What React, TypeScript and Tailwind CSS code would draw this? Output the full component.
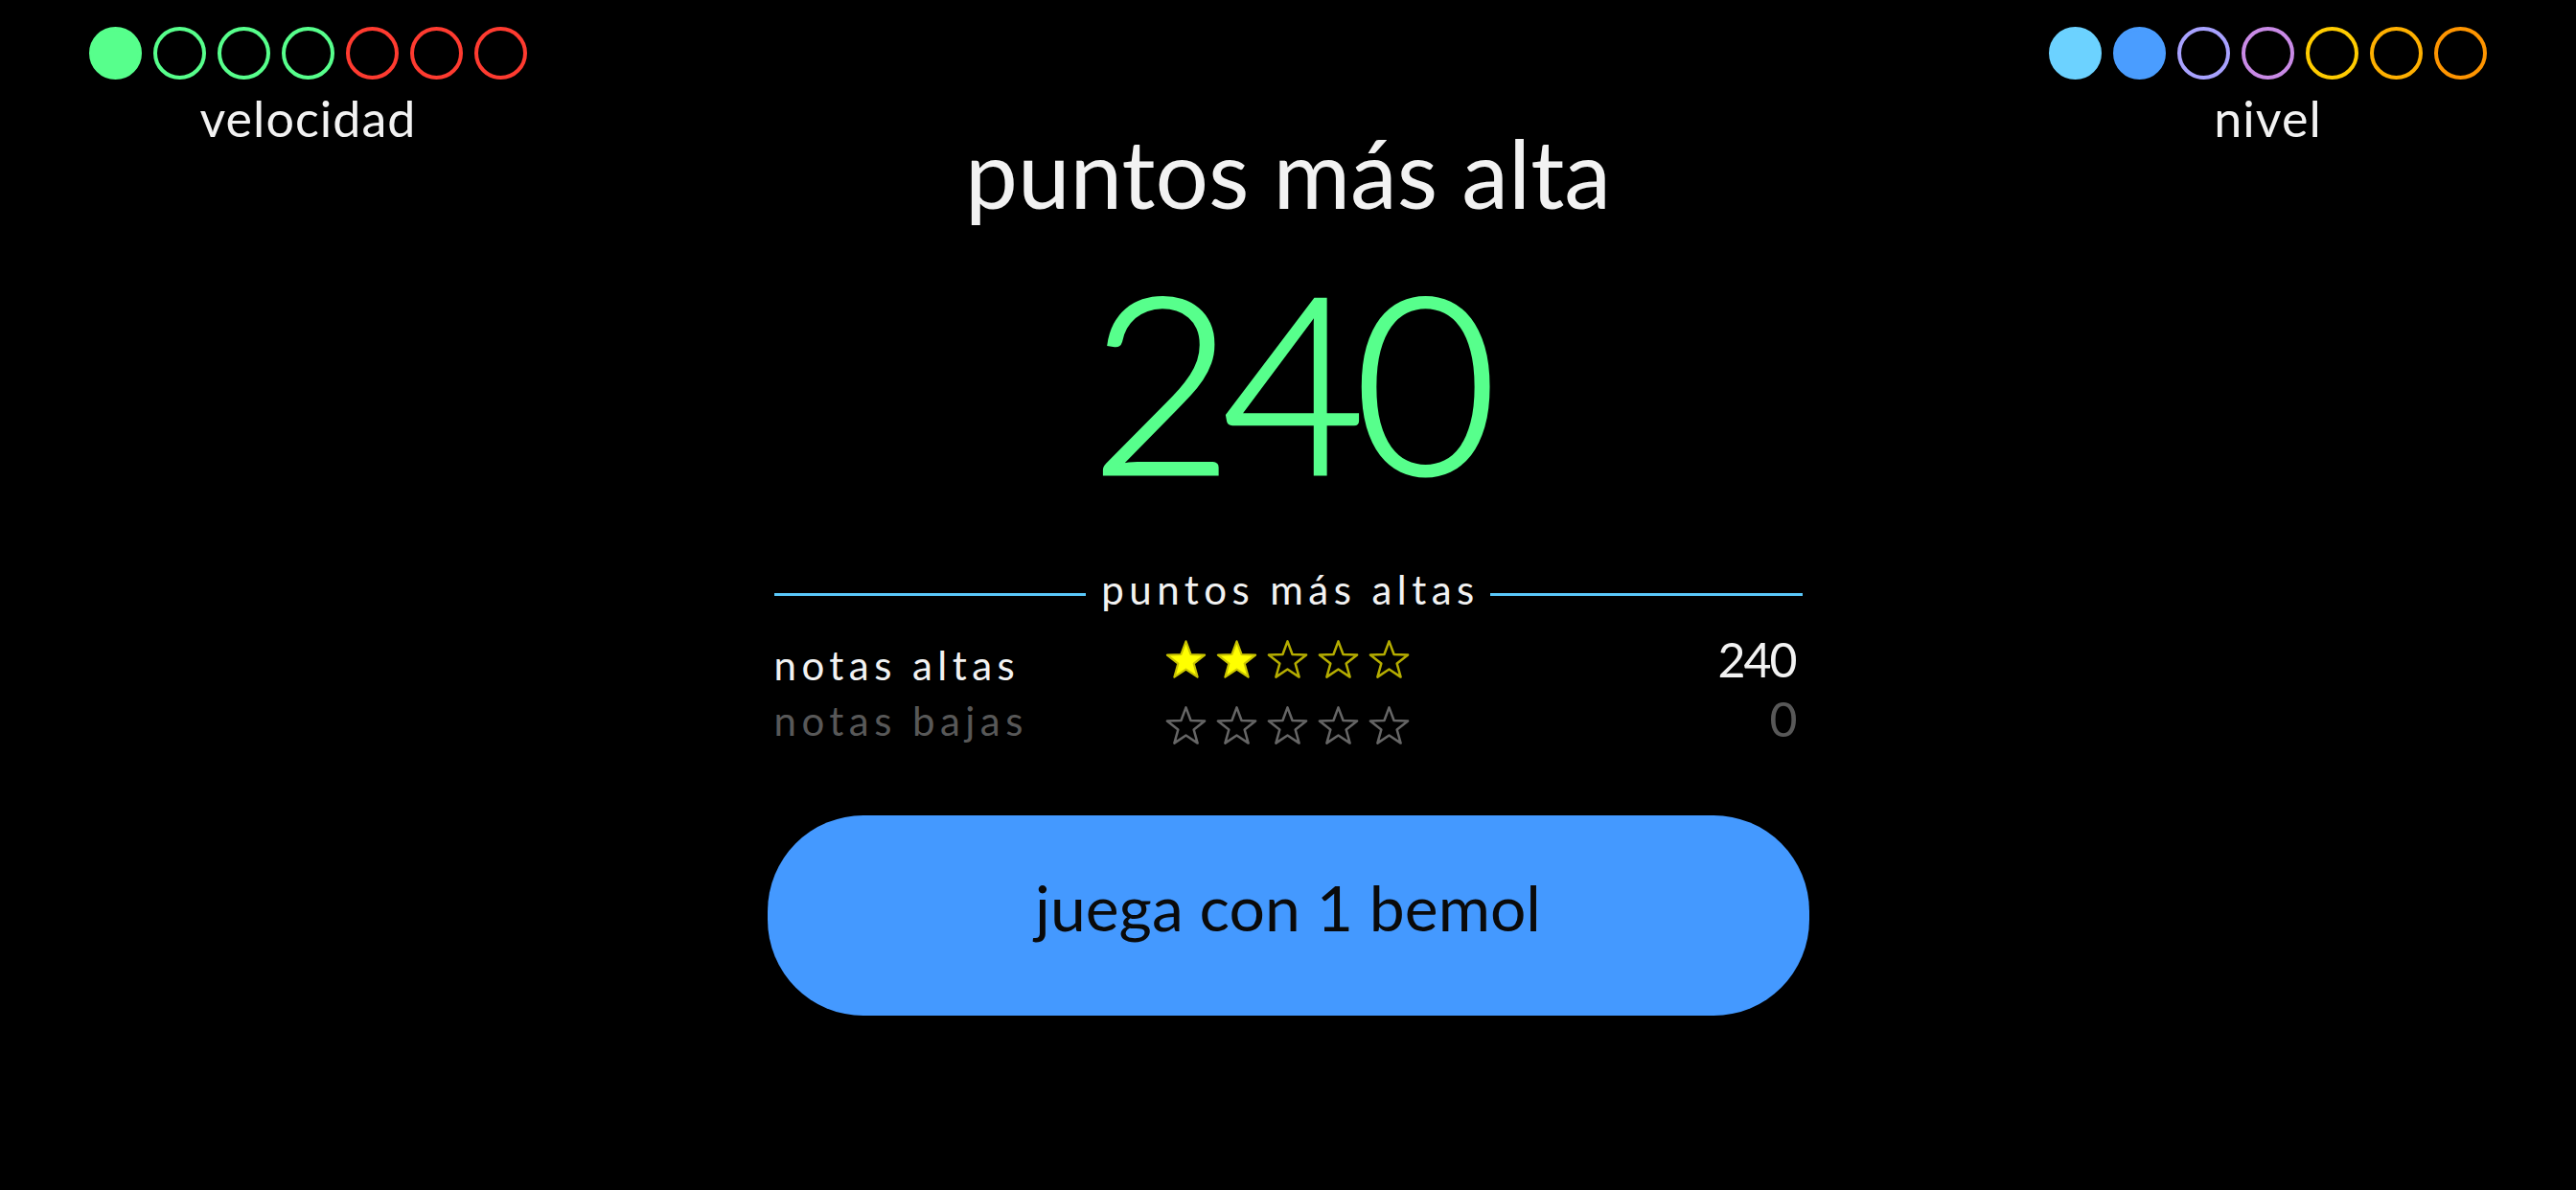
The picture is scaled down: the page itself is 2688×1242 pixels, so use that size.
import React from "react";

const font = { fontFamily: "Lato, 'Noto Sans', sans-serif" };

const STAR = "M12 1.3 L14.82 8.92 L22.94 9.25 L16.57 14.28 L18.76 22.1 L12 17.6 L5.24 22.1 L7.43 14.28 L1.06 9.25 L9.18 8.92 Z";

function Star({ kind }: { kind: "full" | "empty" | "off" }) {
  if (kind === "full") {
    return (
      <svg width="43" height="43" viewBox="0 0 24 24">
        <path d={STAR} fill="#ffff00" stroke="#c9c400" strokeWidth="1.2" strokeLinejoin="round" />
      </svg>
    );
  }
  return (
    <svg width="43" height="43" viewBox="0 0 24 24">
      <path d={STAR} fill="none" stroke={kind === "empty" ? "#b5ad00" : "#666666"} strokeWidth="1.4" strokeLinejoin="round" />
    </svg>
  );
}

function Dot({ color, filled }: { color: string; filled?: boolean }) {
  return (
    <div
      className="w-[55px] h-[55px] rounded-full border-[4px]"
      style={{ borderColor: color, backgroundColor: filled ? color : "transparent" }}
    />
  );
}

const speed = [
  { c: "#57ff8c", f: true },
  { c: "#57ff8c" },
  { c: "#57ff8c" },
  { c: "#57ff8c" },
  { c: "#ff3b30" },
  { c: "#ff3b30" },
  { c: "#ff3b30" },
];

const level = [
  { c: "#6cd2ff", f: true },
  { c: "#4a9dff", f: true },
  { c: "#a8a2ff" },
  { c: "#c98ae6" },
  { c: "#ffcc00" },
  { c: "#ffb000" },
  { c: "#ff9500" },
];

function Meter({ dots, label }: { dots: { c: string; f?: boolean }[]; label: string }) {
  return (
    <div className="flex flex-col items-center w-[457px]">
      <div className="flex gap-3">
        {dots.map((d, i) => (
          <Dot key={i} color={d.c} filled={d.f} />
        ))}
      </div>
      <div className="mt-[14px] text-[52px] leading-[52px] tracking-[0.02em] text-[#f2f2f2]">{label}</div>
    </div>
  );
}

function ScoreRow({ label, stars, value, dim }: { label: string; stars: number; value: string; dim?: boolean }) {
  const tone = dim ? "text-[#585858]" : "text-[#f2f2f2]";
  return (
    <div className="flex items-baseline h-[56px]">
      <div className={`w-[410px] text-[42px] leading-[56px] tracking-[0.13em] ${tone} ${dim ? "translate-y-[2px]" : ""}`}>{label}</div>
      <div className={`self-start flex gap-[10px] -ml-[2px] ${dim ? "mt-[17px]" : "mt-[4px]"}`}>
        {[0, 1, 2, 3, 4].map((i) => (
          <Star key={i} kind={dim ? "off" : i < stars ? "full" : "empty"} />
        ))}
      </div>
      <div className={`flex-1 text-right text-[50px] leading-[56px] tracking-[-2px] mr-[7px] ${tone} ${dim ? "translate-y-[3px]" : "-translate-y-[3px]"}`}>
        {value}
      </div>
    </div>
  );
}

export default function App() {
  return (
    <div className="w-[2688px] h-[1242px] bg-black overflow-hidden" style={font}>
      <div className="flex justify-between items-start px-[93px] pt-[28px]">
        <Meter dots={speed} label="velocidad" />

        <div className="w-[1087px] flex flex-col items-center">
          <h1 className="mt-[103px] text-[98px] leading-[98px] text-[#f2f2f2]">puntos más alta</h1>
          <div className="mt-[37px] text-[258px] leading-[258px] font-light text-[#57ff8c] tracking-[-12px] [-webkit-text-stroke:3px_#57ff8c]">
            240
          </div>

          <div className="mt-[70px] w-full px-[7px]">
            <div className="flex items-center">
              <div className="flex-1 h-[3px] mt-[10px] bg-[#5ac8fa]" />
              <div className="ml-[16px] mr-[11px] text-[42px] leading-[42px] tracking-[0.13em] text-[#f2f2f2]">
                puntos más altas
              </div>
              <div className="flex-1 h-[3px] mt-[10px] bg-[#5ac8fa]" />
            </div>

            <div className="mt-[27px]">
              <ScoreRow label="notas altas" stars={2} value="240" />
              <ScoreRow label="notas bajas" stars={0} value="0" dim />
            </div>
          </div>

          <button className="mt-[76px] w-full h-[209px] rounded-[100px] bg-[#4499ff] flex items-center justify-center pb-[18px]">
            <span className="text-[66px] leading-[66px] text-[#0a0a0a]">juega con 1 bemol</span>
          </button>
        </div>

        <Meter dots={level} label="nivel" />
      </div>
    </div>
  );
}
